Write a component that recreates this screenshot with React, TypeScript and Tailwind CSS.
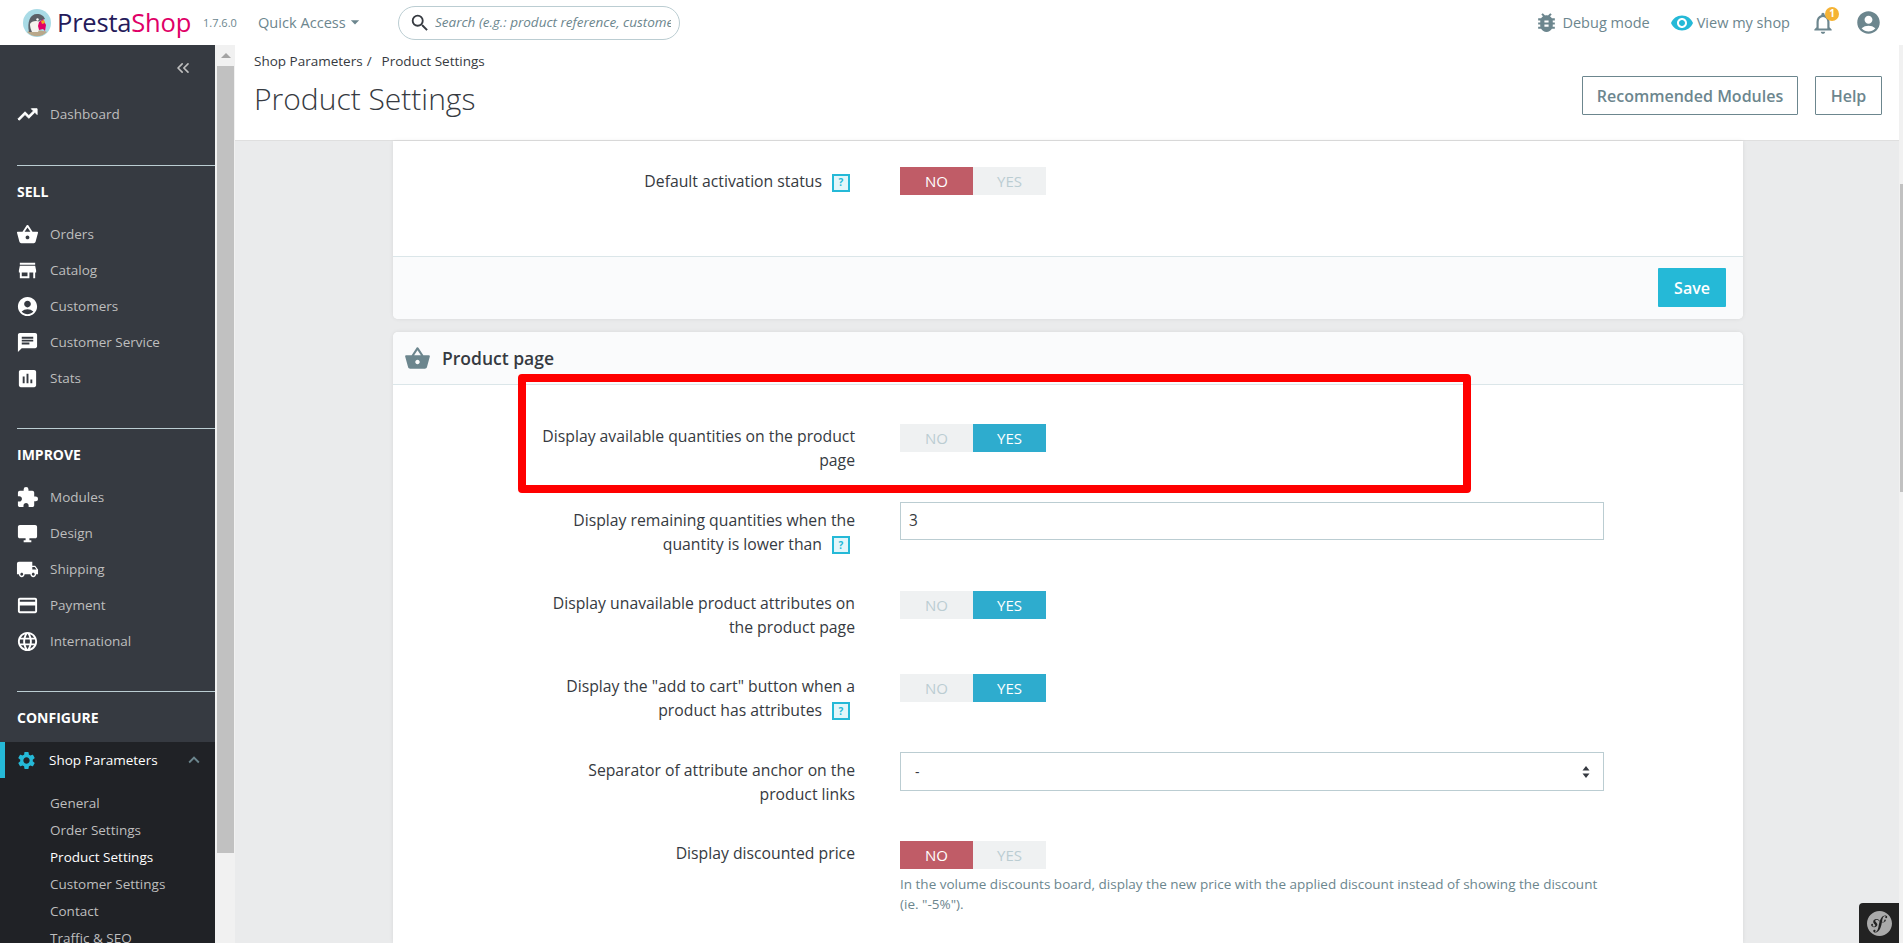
import React from "react";
import { MdShoppingBasket, MdStore, MdAccountCircle, MdChat, MdAssessment, MdExtension, MdDesktopWindows, MdLocalShipping, MdPayment, MdLanguage, MdSettings, MdExpandLess, MdBugReport, MdVisibility, MdNotificationsNone, MdSearch, MdArrowDropDown } from "react-icons/md";
import { SiSymfony } from "react-icons/si";
import { ChevronsLeft } from "lucide-react";

const font = { fontFamily: '"Open Sans", sans-serif' };

function TrendUp({ size, className }: { size?: number; className?: string }) {
  return (
    <svg width={size} height={size} viewBox="0 0 24 24" className={className}>
      <path d="M16 6l2.29 2.29-4.88 4.88-4-4L2 16.59 3.41 18l6-6 4 4 6.3-6.29L22 12V6z" fill="currentColor" stroke="currentColor" strokeWidth="1" />
    </svg>
  );
}

function Nav({ icon: Icon, label }: { icon: React.ComponentType<{ size?: number; className?: string }>; label: string }) {
  return (
    <div className="h-9 flex items-center pl-[17px]">
      <span className="w-[33px] flex items-center"><Icon size={23} className="text-white -ml-[1px]" /></span>
      <span className="text-[13.5px] text-[#bebebe]">{label}</span>
    </div>
  );
}

function SectionHead({ label }: { label: string }) {
  return (
    <div className="ml-[17px] border-t border-[#bbcdd2] h-[54px] shrink-0 flex items-center pb-[2px] text-[14px] font-bold text-white">{label}</div>
  );
}

function Help() {
  return (
    <span className="inline-flex w-[18px] h-[18px] items-center justify-center border-2 border-[#25b9d7] bg-[#e3f6fa] text-[#25b9d7] text-[10px] font-bold ml-[10px] mr-[5px] align-middle">?</span>
  );
}

function Switch({ on }: { on: boolean }) {
  return (
    <div className="flex w-[146px] h-[28px] text-[15px] font-normal bg-[#eff1f2] shrink-0">
      <span className={`w-[73px] flex items-center justify-center ${on ? "text-[#bbcdd2]" : "bg-[#c05c67] text-white"}`}>NO</span>
      <span className={`w-[73px] flex items-center justify-center ${on ? "bg-[#2eacce] text-white" : "text-[#bbcdd2]"}`}>YES</span>
    </div>
  );
}

function Row({ label, help, h, labelClass, className, children }: { label: string; help?: boolean; h: number; labelClass?: string; className?: string; children: React.ReactNode }) {
  return (
    <div className={`flex items-start ${className ?? ""}`} style={{ height: h }}>
      <div className={`w-[320px] ml-[142px] text-right text-[15.75px] leading-[23.5px] text-[#363a41] shrink-0 ${labelClass ?? "pt-[1px]"}`}>
        {label}
        {help && <Help />}
      </div>
      <div className="ml-[45px] w-[704px]">{children}</div>
    </div>
  );
}

function Puffin() {
  return (
    <svg width="28" height="28" viewBox="0 0 28 28" className="shrink-0">
      <circle cx="14" cy="14" r="14" fill="#a9dbe6" />
      <path d="M4 23c3-2 17-2 20 0a14 14 0 0 1-20 0z" fill="#b9a88a" />
      <path d="M6 23C4 13 7 5 14 5c4 0 7 2 8 5l-6 2-2 11z" fill="#5b6067" />
      <path d="M7 15c1-3 7-4 10-2l1 3-3 7H9c-1-2-2-5-2-8z" fill="#f4f2ee" />
      <circle cx="14.5" cy="10.5" r="1.2" fill="#fff" />
      <path d="M16 13l4-3 3 6-1 6-2-2-4 1-1-4z" fill="#df0067" />
      <path d="M18 12l3-1 1 3-3 1z" fill="#f5a623" />
    </svg>
  );
}

export default function App() {
  return (
    <div className="w-[1903px] h-[943px] overflow-hidden flex flex-col bg-white text-[#363a41]" style={font}>
      <header className="h-[45px] shrink-0 flex items-center bg-white relative">
        <div className="ml-[23px] w-[167px] flex items-center shrink-0">
          <Puffin />
          <span className="ml-[6px] text-[25.5px] leading-none font-medium tracking-[-0.2px] text-[#251b5b] whitespace-nowrap">Presta<span className="text-[#df0067]">Shop</span></span>
        </div>
        <span className="ml-[13px] w-[34px] mt-[2px] text-[11px] text-[#6c868e] shrink-0">1.7.6.0</span>
        <div className="ml-[21px] w-[120px] flex items-center text-[14.6px] text-[#6c868e] shrink-0">Quick Access<MdArrowDropDown size={20} className="-ml-[1px]" /></div>
        <div className="ml-[20px] w-[282px] h-[34px] rounded-full border border-[#bbcdd2] flex items-center pl-[10px] pr-2 overflow-hidden shrink-0">
          <MdSearch size={22} className="text-[#363a41] shrink-0" />
          <span className="ml-[4px] text-[13.5px] italic text-[#6c868e] whitespace-nowrap overflow-hidden">Search (e.g.: product reference, customer name…)</span>
        </div>
        <div className="ml-auto flex items-center mr-[21px] text-[14.5px] text-[#6c868e]">
          <MdBugReport size={25} className="text-[#6c868e]" />
          <span className="ml-[3px]">Debug mode</span>
          <MdVisibility size={24} className="ml-[20px] text-[#25b9d7]" />
          <span className="ml-[3px]">View my shop</span>
          <span className="relative ml-[20px]">
            <MdNotificationsNone size={26} className="text-[#6c868e]" />
            <span className="absolute -top-[3px] left-[15px] w-[14px] h-[14px] rounded-full bg-[#f5b335] text-white text-[10px] font-bold flex items-center justify-center">1</span>
          </span>
          <MdAccountCircle size={27} className="ml-[19px] text-[#6c868e]" />
        </div>
      </header>

      <div className="flex-1 flex min-h-0">
        <aside className="w-[215px] shrink-0 bg-[#363a41] overflow-hidden flex flex-col">
          <div className="h-[120px] shrink-0 flex flex-col">
            <div className="h-[46px] flex items-center justify-end pr-[22px]"><ChevronsLeft size={20} strokeWidth={2} className="text-[#bebebe]" /></div>
            <div className="mt-[5px]"><Nav icon={TrendUp} label="Dashboard" /></div>
          </div>
          <SectionHead label="SELL" />
          <div className="h-[212px] shrink-0 -mt-[3px]">
            <Nav icon={MdShoppingBasket} label="Orders" />
            <Nav icon={MdStore} label="Catalog" />
            <Nav icon={MdAccountCircle} label="Customers" />
            <Nav icon={MdChat} label="Customer Service" />
            <Nav icon={MdAssessment} label="Stats" />
          </div>
          <SectionHead label="IMPROVE" />
          <div className="h-[212px] shrink-0 -mt-[3px]">
            <Nav icon={MdExtension} label="Modules" />
            <Nav icon={MdDesktopWindows} label="Design" />
            <Nav icon={MdLocalShipping} label="Shipping" />
            <Nav icon={MdPayment} label="Payment" />
            <Nav icon={MdLanguage} label="International" />
          </div>
          <SectionHead label="CONFIGURE" />
          <div className="bg-[#202226] flex-1 -mt-[3px]">
            <div className="h-9 flex items-center border-l-[5px] border-[#25b9d7] pl-[11px] pr-[10px]">
              <MdSettings size={21} className="text-[#25b9d7]" />
              <span className="ml-[12px] text-[13.5px] text-white">Shop Parameters</span>
              <MdExpandLess size={22} className="ml-auto text-[#6c868e]" />
            </div>
            <div className="pl-[50px] pt-[12px] text-[13.5px] text-[#bebebe] leading-[27px]">
              <div>General</div>
              <div>Order Settings</div>
              <div className="text-white">Product Settings</div>
              <div>Customer Settings</div>
              <div>Contact</div>
              <div>Traffic &amp; SEO</div>
            </div>
          </div>
        </aside>

        <div className="w-[20px] shrink-0 bg-[#f1f1f1] flex flex-col items-center pl-[1px]">
          <div className="h-[21px] w-full bg-[#f1f1f1] flex items-center justify-center">
            <div className="w-0 h-0 border-l-[5px] border-r-[5px] border-b-[5px] border-l-transparent border-r-transparent border-b-[#a3a3a3]" />
          </div>
          <div className="w-[17px] h-[787px] bg-[#c1c1c1]" />
        </div>

        <main className="w-[1664px] shrink-0 bg-[#eaebec] flex flex-col overflow-hidden relative">
          <div className="h-[96px] shrink-0 bg-white border-b border-[#dfdfdf] flex pl-[19px] pr-[17px]">
            <div>
              <div className="mt-[6px] flex gap-[4px] text-[13.5px] leading-[20px] text-[#363a41]"><span>Shop Parameters</span><span>/</span><span className="ml-[6px]">Product Settings</span></div>
              <h1 className="mt-[8px] text-[30px] leading-[40px] font-light text-[#363a41]">Product Settings</h1>
            </div>
            <div className="ml-auto flex gap-[17px] mt-[31px]">
              <div className="w-[216px] h-[39px] border border-[#6c868e] rounded-[1px] text-[#6c868e] text-[16px] font-semibold flex items-center justify-center">Recommended Modules</div>
              <div className="w-[67px] h-[39px] border border-[#6c868e] rounded-[1px] text-[#6c868e] text-[16px] font-semibold flex items-center justify-center">Help</div>
            </div>
          </div>

          <section className="ml-[158px] w-[1350px] h-[178px] shrink-0 bg-white rounded-b-[5px] shadow-[0_0_4px_rgba(0,0,0,0.08)] flex flex-col">
            <div className="h-[115px] pt-[26px]">
              <Row label="Default activation status" help h={28} labelClass="pt-[3px]"><Switch on={false} /></Row>
            </div>
            <div className="flex-1 bg-[#fafbfc] border-t border-[#dbe6e9] rounded-b-[5px] flex items-start justify-end pt-[11px] pr-[17px]">
              <div className="w-[68px] h-[39px] bg-[#25b9d7] rounded-[1px] text-white text-[16px] font-semibold flex items-center justify-center">Save</div>
            </div>
          </section>

          <section className="ml-[158px] w-[1350px] mt-[13px] flex-1 bg-white rounded-t-[5px] shadow-[0_0_4px_rgba(0,0,0,0.08)]">
            <div className="h-[53px] bg-[#fafbfc] border-b border-[#dbe6e9] rounded-t-[5px] flex items-center pl-[11px]">
              <MdShoppingBasket size={27} className="text-[#6c868e]" />
              <span className="ml-[11px] text-[17.5px] font-semibold text-[#363a41]">Product page</span>
            </div>
            <Row label="Display available quantities on the product page" h={117} className="pt-[39px]"><Switch on /></Row>
            <Row label="Display remaining quantities when the quantity is lower than" help labelClass="pt-[7px]" h={89}>
              <div className="h-[38px] border border-[#bbcdd2] flex items-center pl-[8px] text-[15.4px] text-[#363a41]">3</div>
            </Row>
            <Row label="Display unavailable product attributes on the product page" h={83}><Switch on /></Row>
            <Row label="Display the &quot;add to cart&quot; button when a product has attributes" help h={78}><Switch on /></Row>
            <Row label="Separator of attribute anchor on the product links" labelClass="pt-[7px]" h={89}>
              <div className="h-[39px] border border-[#bbcdd2] flex items-center justify-between pl-[14px] pr-[13px] text-[14px] text-[#363a41]">
                <span>-</span>
                <svg width="8" height="12" viewBox="0 0 8 12"><path d="M4 0l3.5 4.5h-7zM4 12L.5 7.5h7z" fill="#363a41" /></svg>
              </div>
            </Row>
            <Row label="Display discounted price" h={100}>
              <Switch on={false} />
              <p className="mt-[5px] text-[13.5px] leading-[20px] text-[#6c868e]">In the volume discounts board, display the new price with the applied discount instead of showing the discount (ie. "-5%").</p>
            </Row>
          </section>

          <div className="absolute left-[283px] top-[329px] w-[953px] h-[119px] border-[8px] border-[#ff0000] rounded-[4px]" />
          <div className="absolute right-0 bottom-0 w-[40px] h-[40px] bg-[#222222] rounded-tl-[4px] flex items-center justify-center">
            <SiSymfony size={25} className="text-[#aaaaaa]" />
          </div>
        </main>

        <div className="w-[4px] shrink-0 bg-[#f1f1f1] relative">
          <div className="absolute left-[1px] right-0 top-[139px] h-[308px] bg-[#c1c1c1]" />
        </div>
      </div>
    </div>
  );
}
